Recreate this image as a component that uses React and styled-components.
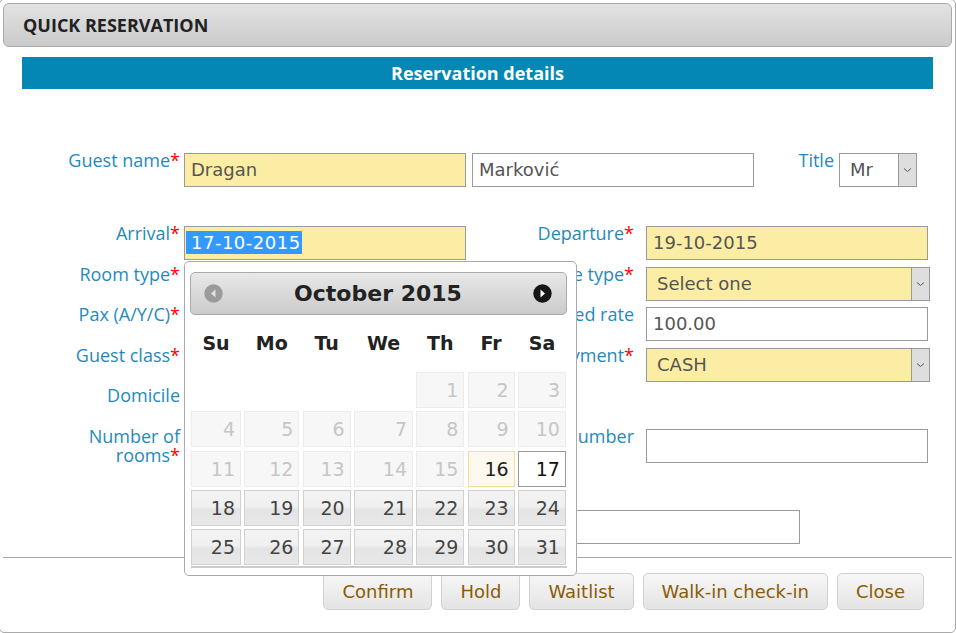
import React from "react";
import styled, { createGlobalStyle } from "styled-components";

const GlobalStyle = createGlobalStyle`
  html, body {
    margin: 0;
    padding: 0;
    background: #fff;
  }
  body {
    font-family: "Open Sans", sans-serif;
    overflow: hidden;
  }
`;

const colors = {
  label: "#1f8abd",
  required: "#f00",
  field: "#fceda4",
  border: "#9a9a9a",
  text: "#555",
  blue: "#0487b4",
  button: "#8a5c04"
};

const Dialog = styled.div`
  box-sizing: border-box;
  width: 957px;
  height: 634px;
  margin: -1px 0 0 -1px;
  border: 1px solid #aaa;
  border-radius: 5px;
  padding: 3px;
  display: flex;
  flex-direction: column;
`;

const TitleBar = styled.div`
  box-sizing: border-box;
  height: 44px;
  border: 1px solid #aaa;
  border-radius: 6px;
  background: linear-gradient(#e3e3e3, #cacaca);
  display: flex;
  align-items: center;
  padding-left: 19px;
  font-weight: 700;
  font-size: 18px;
  color: #222;
`;

const Body = styled.div`
  margin: 10px 19px 0;
`;

const SectionBar = styled.div`
  height: 32px;
  background: ${colors.blue};
  color: #fff;
  font-weight: 700;
  font-size: 18px;
  display: flex;
  align-items: center;
  justify-content: center;
`;

const Form = styled.div`
  margin: 64px 0 0 38px;
  display: flex;
  flex-direction: column;
  gap: 6.6px;
`;

const NameRow = styled.div`
  display: flex;
  align-items: flex-start;
  height: 34px;
  margin-bottom: 32.4px;
`;

const Row = styled.div`
  display: grid;
  grid-template-columns: 120px 282px 172px 284px;
  column-gap: 4px;
  align-items: start;
  min-height: 34px;
  margin-top: ${p => p.$gap || 0}px;
`;

const Label = styled.div`
  box-sizing: border-box;
  width: ${p => p.$width || "auto"};
  margin-top: -2px;
  padding-right: ${p => p.$pad || 0}px;
  text-align: right;
  font-size: 18px;
  line-height: 19px;
  color: ${colors.label};

  & > b {
    font-weight: 400;
    color: ${colors.required};
  }
`;

const Input = styled.div`
  box-sizing: border-box;
  width: ${p => p.$width || 282}px;
  height: 34px;
  margin-left: ${p => p.$ml || 0}px;
  border: 1px solid ${colors.border};
  background: ${p => (p.$required ? colors.field : "#fff")};
  padding: 0 6px;
  font-family: "DejaVu Sans", Verdana, sans-serif;
  font-size: 18px;
  line-height: 32px;
  color: ${colors.text};
  white-space: nowrap;
  overflow: hidden;
`;

const Selected = styled.span`
  background: #3399ff;
  color: #fff;
  display: inline-block;
  line-height: 23px;
  margin-left: -5px;
  padding: 0 1px 0 5px;
  letter-spacing: 0.5px;
`;

const Select = styled.div`
  box-sizing: border-box;
  width: ${p => p.$width || 284}px;
  height: 34px;
  border: 1px solid #999;
  background: ${p => (p.$required ? colors.field : "#fff")};
  display: flex;
  font-family: "DejaVu Sans", Verdana, sans-serif;
  font-size: 18px;
  color: ${colors.text};
`;

const SelectText = styled.div`
  flex: 1;
  padding-left: 10px;
  line-height: 32px;
  white-space: nowrap;
  overflow: hidden;
`;

const DropButton = styled.div`
  width: 17px;
  border-left: 1px solid #999;
  background: #dedede;
  display: flex;
  align-items: center;
  justify-content: center;
`;

const Anchor = styled.div`
  position: relative;
`;

const Popup = styled.div`
  position: absolute;
  top: 35px;
  left: 0;
  z-index: 10;
  box-sizing: border-box;
  width: 393px;
  height: 315px;
  border: 1px solid #aaa;
  border-radius: 5px;
  background: #fff;
  padding: 10px 9px 0 5px;
  font-family: "DejaVu Sans", Verdana, sans-serif;
`;

const CalHeader = styled.div`
  box-sizing: border-box;
  height: 43px;
  border: 1px solid #aaa;
  border-radius: 5px;
  background: linear-gradient(#e8e8e8, #cbcbcb);
  display: flex;
  align-items: center;
  justify-content: space-between;
  padding: 0 14px 0 13px;
  font-weight: 700;
  font-size: 22px;
  color: #222;
`;

const CalGrid = styled.div`
  display: grid;
  grid-template-columns: 50px 55px 48px 59px 48px 47px 48px;
  column-gap: 3.33px;
  margin-left: 1px;
`;

const DayNames = styled(CalGrid)`
  height: 57px;
  align-items: center;
  justify-items: center;
  font-weight: 700;
  font-size: 19px;
  color: #222;
`;

const Dates = styled(CalGrid)`
  grid-auto-rows: 36px;
  row-gap: 3.3px;
  padding-bottom: 1px;
  border-bottom: 2px solid #ccc;
`;

const cellStyles = {
  off: "background: #f7f7f7; border-color: #ececec; color: #c6c6c6;",
  on: "background: linear-gradient(#f3f3f3 0%, #f0f0f0 45%, #e4e4e4 55%, #e8e8e8 100%); border-color: #d0d0d0; color: #444;",
  today: "background: #fdf9ee; border-color: #f3df9c; color: #222;",
  picked: "background: #fff; border-color: #999; color: #111;"
};

const Cell = styled.div`
  box-sizing: border-box;
  border: 1px solid transparent;
  text-align: right;
  padding-right: 5px;
  font-size: 19px;
  line-height: 34px;
  ${p => (p.$state ? cellStyles[p.$state] : "")}
`;

const Separator = styled.div`
  height: 1px;
  background: #aaa;
  margin-top: 13px;
`;

const Footer = styled.div`
  display: flex;
  justify-content: flex-end;
  gap: 9px;
  padding: 15px 28px 0 0;
`;

const Button = styled.div`
  box-sizing: border-box;
  height: 37px;
  padding: 0 18px;
  border: 1px solid #d0d0d0;
  border-radius: 5px;
  background: linear-gradient(#f7f7f7, #e4e4e4);
  font-family: "DejaVu Sans", Verdana, sans-serif;
  font-size: 18px;
  line-height: 35px;
  color: ${colors.button};
`;

const Chevron = () => (
  <svg width="9" height="6" viewBox="0 0 9 6">
    <path d="M1 1.5 L4.5 4.5 L8 1.5" fill="none" stroke="#555" strokeWidth="1" />
  </svg>
);

const NavArrow = ({ next }) => (
  <svg width="19" height="19" viewBox="0 0 19 19">
    <circle cx="9.5" cy="9.5" r="9.2" fill={next ? "#161616" : "#9b9b9b"} />
    {next ? (
      <path d="M7.5 5.5 L12 9.5 L7.5 13.5 Z" fill="#fff" />
    ) : (
      <path d="M11.5 5.5 L7 9.5 L11.5 13.5 Z" fill="#e2e2e2" />
    )}
  </svg>
);

const Req = ({ children }) => (
  <Label>
    {children}
    <b>*</b>
  </Label>
);

const dayNames = ["Su", "Mo", "Tu", "We", "Th", "Fr", "Sa"];

const days = [null, null, null, null];
for (let d = 1; d <= 31; d++) days.push(d);

const stateOf = d => {
  if (d === 16) return "today";
  if (d === 17) return "picked";
  return d < 16 ? "off" : "on";
};

const Calendar = () => (
  <Popup>
    <CalHeader>
      <NavArrow />
      <span>October 2015</span>
      <NavArrow next />
    </CalHeader>
    <DayNames>
      {dayNames.map(n => (
        <span key={n}>{n}</span>
      ))}
    </DayNames>
    <Dates>
      {days.map((d, i) =>
        d ? (
          <Cell key={i} $state={stateOf(d)}>
            {d}
          </Cell>
        ) : (
          <Cell key={i} />
        )
      )}
    </Dates>
  </Popup>
);

export default function App() {
  return (
    <>
      <GlobalStyle />
      <Dialog>
        <TitleBar>QUICK RESERVATION</TitleBar>
        <Body>
          <SectionBar>Reservation details</SectionBar>
          <Form>
            <NameRow>
              <Label $width="120px">
                Guest name<b>*</b>
              </Label>
              <Input $required $ml={4}>Dragan</Input>
              <Input $ml={6}>Marković</Input>
              <Label $width="85px" $pad={5}>
                Title
              </Label>
              <Select $width={78}>
                <SelectText>Mr</SelectText>
                <DropButton>
                  <Chevron />
                </DropButton>
              </Select>
            </NameRow>

            <Row>
              <Req>Arrival</Req>
              <Anchor>
                <Input $required>
                  <Selected>17-10-2015</Selected>
                </Input>
                <Calendar />
              </Anchor>
              <Label $pad={8}>
                Departure<b>*</b>
              </Label>
              <Input $required>19-10-2015</Input>
            </Row>

            <Row>
              <Req>Room type</Req>
              <Select $width={282} $required>
                <SelectText>Select one</SelectText>
                <DropButton>
                  <Chevron />
                </DropButton>
              </Select>
              <Label $pad={8}>
                Rate type<b>*</b>
              </Label>
              <Select $required>
                <SelectText>Select one</SelectText>
                <DropButton>
                  <Chevron />
                </DropButton>
              </Select>
            </Row>

            <Row>
              <Req>Pax (A/Y/C)</Req>
              <Input $required>2</Input>
              <Label $pad={8}>Fixed rate</Label>
              <Input $width={282}>100.00</Input>
            </Row>

            <Row>
              <Req>Guest class</Req>
              <Select $width={282} $required>
                <SelectText>Select one</SelectText>
                <DropButton>
                  <Chevron />
                </DropButton>
              </Select>
              <Label $pad={8}>
                Payment<b>*</b>
              </Label>
              <Select $required>
                <SelectText>CASH</SelectText>
                <DropButton>
                  <Chevron />
                </DropButton>
              </Select>
            </Row>

            <Row>
              <Label>Domicile</Label>
              <Input />
            </Row>

            <Row>
              <Label>
                Number of rooms<b>*</b>
              </Label>
              <Input $required>1</Input>
              <Label $pad={8}>Voucher number</Label>
              <Input $width={282} />
            </Row>

            <Row $gap={38}>
              <span />
              <Input $width={616} />
            </Row>
          </Form>
        </Body>
        <Separator />
        <Footer>
          <Button>Confirm</Button>
          <Button>Hold</Button>
          <Button>Waitlist</Button>
          <Button>Walk-in check-in</Button>
          <Button>Close</Button>
        </Footer>
      </Dialog>
    </>
  );
}
